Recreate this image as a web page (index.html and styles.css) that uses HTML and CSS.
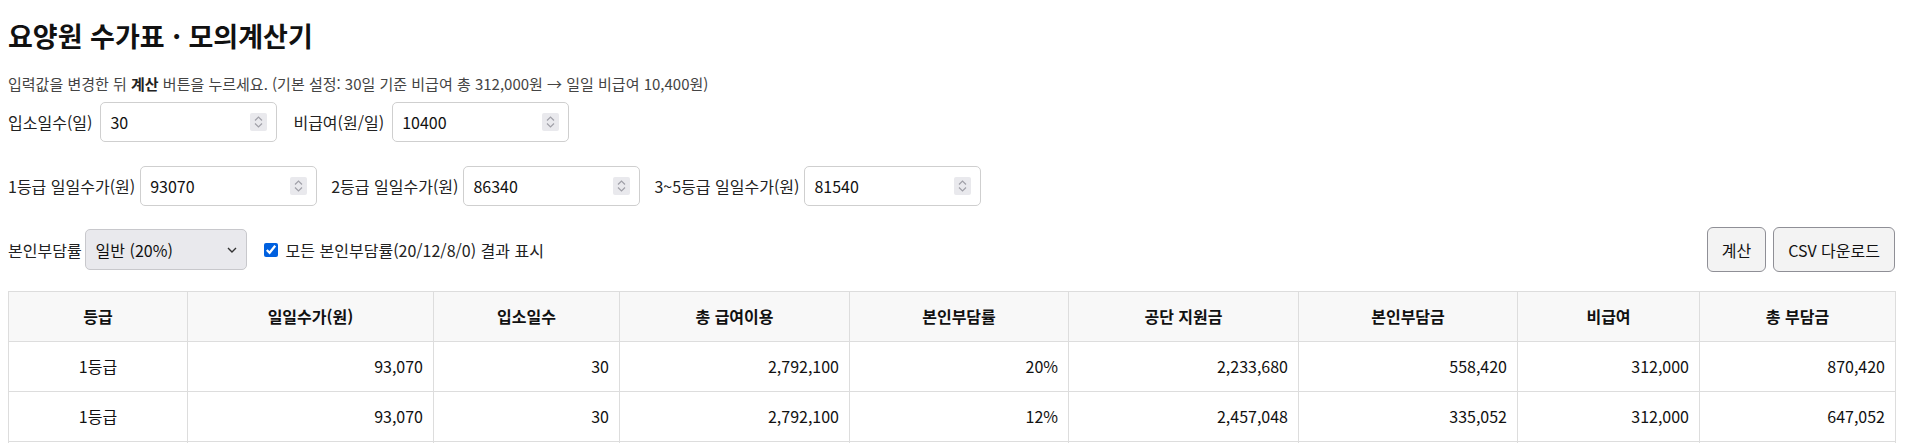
FILE: index.html
```html
<!DOCTYPE html>
<html lang="ko">
<head>
<meta charset="utf-8">
<title>요양원 수가표 · 모의계산기</title>
<link rel="stylesheet" href="styles.css">
</head>
<body>
<main class="page">
  <h1 class="title">요양원 수가표 · 모의계산기</h1>
  <p class="desc">입력값을 변경한 뒤 <b>계산</b> 버튼을 누르세요. (기본 설정: 30일 기준 비급여 총 312,000원 → 일일 비급여 10,400원)</p>

  <div class="row row-1">
    <label class="field"><span class="label">입소일수(일)</span>
      <span class="numbox"><input class="num" type="number" value="30"><span class="spin"><svg width="17" height="18" viewBox="0 0 17 18"><path d="M5 7.5 L8.5 4 L12 7.5 M5 10.5 L8.5 14 L12 10.5" fill="none" stroke="#a0a0a8" stroke-width="1.2"/></svg></span></span>
    </label>
    <label class="field"><span class="label">비급여(원/일)</span>
      <span class="numbox"><input class="num" type="number" value="10400"><span class="spin"><svg width="17" height="18" viewBox="0 0 17 18"><path d="M5 7.5 L8.5 4 L12 7.5 M5 10.5 L8.5 14 L12 10.5" fill="none" stroke="#a0a0a8" stroke-width="1.2"/></svg></span></span>
    </label>
  </div>

  <div class="row row-2">
    <label class="field"><span class="label">1등급 일일수가(원)</span>
      <span class="numbox"><input class="num" type="number" value="93070"><span class="spin"><svg width="17" height="18" viewBox="0 0 17 18"><path d="M5 7.5 L8.5 4 L12 7.5 M5 10.5 L8.5 14 L12 10.5" fill="none" stroke="#a0a0a8" stroke-width="1.2"/></svg></span></span>
    </label>
    <label class="field"><span class="label">2등급 일일수가(원)</span>
      <span class="numbox"><input class="num" type="number" value="86340"><span class="spin"><svg width="17" height="18" viewBox="0 0 17 18"><path d="M5 7.5 L8.5 4 L12 7.5 M5 10.5 L8.5 14 L12 10.5" fill="none" stroke="#a0a0a8" stroke-width="1.2"/></svg></span></span>
    </label>
    <label class="field"><span class="label">3~5등급 일일수가(원)</span>
      <span class="numbox"><input class="num" type="number" value="81540"><span class="spin"><svg width="17" height="18" viewBox="0 0 17 18"><path d="M5 7.5 L8.5 4 L12 7.5 M5 10.5 L8.5 14 L12 10.5" fill="none" stroke="#a0a0a8" stroke-width="1.2"/></svg></span></span>
    </label>
  </div>

  <div class="row row-3">
    <label class="field field-sel"><span class="label">본인부담률</span>
      <span class="selectbox">
        <select class="sel">
          <option selected>일반 (20%)</option>
          <option>감경 (12%)</option>
          <option>감경 (8%)</option>
          <option>기초수급 (0%)</option>
        </select>
        <svg class="chev" width="10" height="6" viewBox="0 0 10 6"><path d="M1 1 L5 5 L9 1" fill="none" stroke="#333" stroke-width="1.4"/></svg>
      </span>
    </label>
    <label class="check"><input type="checkbox" class="cb" checked><span>모든 본인부담률(20/12/8/0) 결과 표시</span></label>
    <div class="actions">
      <button class="btn" type="button">계산</button>
      <button class="btn" type="button">CSV 다운로드</button>
    </div>
  </div>

  <table class="result">
    <colgroup>
      <col class="w-grade"><col class="w-daily"><col class="w-days"><col class="w-total"><col class="w-rate"><col class="w-gov"><col class="w-self"><col class="w-nonpay"><col class="w-sum">
    </colgroup>
    <thead>
      <tr><th>등급</th><th>일일수가(원)</th><th>입소일수</th><th>총 급여이용</th><th>본인부담률</th><th>공단 지원금</th><th>본인부담금</th><th>비급여</th><th>총 부담금</th></tr>
    </thead>
    <tbody>
      <tr><td class="c">1등급</td><td>93,070</td><td>30</td><td>2,792,100</td><td>20%</td><td>2,233,680</td><td>558,420</td><td>312,000</td><td>870,420</td></tr>
      <tr><td class="c">1등급</td><td>93,070</td><td>30</td><td>2,792,100</td><td>12%</td><td>2,457,048</td><td>335,052</td><td>312,000</td><td>647,052</td></tr>
      <tr><td class="c">1등급</td><td>93,070</td><td>30</td><td>2,792,100</td><td>8%</td><td>2,568,732</td><td>223,368</td><td>312,000</td><td>535,368</td></tr>
      <tr><td class="c">1등급</td><td>93,070</td><td>30</td><td>2,792,100</td><td>0%</td><td>2,792,100</td><td>0</td><td>312,000</td><td>312,000</td></tr>
      <tr><td class="c">2등급</td><td>86,340</td><td>30</td><td>2,590,200</td><td>20%</td><td>2,072,160</td><td>518,040</td><td>312,000</td><td>830,040</td></tr>
      <tr><td class="c">2등급</td><td>86,340</td><td>30</td><td>2,590,200</td><td>12%</td><td>2,279,376</td><td>310,824</td><td>312,000</td><td>622,824</td></tr>
    </tbody>
  </table>
</main>
</body>
</html>
```
FILE: styles.css
```css
html, body {
  margin: 0;
  padding: 0;
  background: #fff;
}
body {
  font-family: "Noto Sans CJK KR", "Noto Sans", sans-serif;
  font-size: 16px;
  color: #222;
  overflow: hidden;
}
.page {
  padding: 18px 11px 0 8px;
}
.title {
  font-size: 27px;
  line-height: 35px;
  font-weight: 700;
  color: #111;
  margin: 0 0 21px;
}
.desc {
  font-size: 15px;
  line-height: 20px;
  color: #444;
  margin: 0 0 8px;
}
.desc b {
  color: #222;
}
.row {
  display: flex;
  align-items: center;
  gap: 16px;
}
.row-1 {
  height: 40px;
  margin-bottom: 24px;
}
.row-2 {
  height: 40px;
  margin-bottom: 21px;
  gap: 14px;
}
.row-3 {
  height: 45px;
  margin-bottom: 19px;
}
.field {
  display: flex;
  align-items: center;
  gap: 8px;
}
.row-2 .field {
  gap: 5px;
}
.field-sel {
  gap: 3px;
}
.label {
  white-space: nowrap;
}
.numbox {
  display: flex;
  align-items: center;
  box-sizing: border-box;
  width: 177px;
  height: 40px;
  border: 1px solid #cfcfcf;
  border-radius: 5px;
  background: #fff;
  padding: 0 9px 0 9px;
}
.num {
  flex: 1;
  min-width: 0;
  border: 0;
  outline: none;
  padding: 0;
  margin: 0;
  font: inherit;
  font-size: 16px;
  color: #111;
  background: transparent;
  -moz-appearance: textfield;
}
.num::-webkit-inner-spin-button,
.num::-webkit-outer-spin-button {
  -webkit-appearance: none;
  margin: 0;
}
.spin {
  display: flex;
  width: 17px;
  height: 18px;
  background: #e9e9ed;
  border-radius: 2px;
}
.selectbox {
  position: relative;
  display: inline-flex;
}
.sel {
  -webkit-appearance: none;
  appearance: none;
  box-sizing: border-box;
  width: 162px;
  height: 41px;
  padding: 0 28px 0 10px;
  border: 1px solid #c8c8cc;
  border-radius: 5px;
  background: #e9e9ed;
  font: inherit;
  font-size: 16px;
  color: #111;
}
.chev {
  position: absolute;
  right: 10px;
  top: 18px;
  pointer-events: none;
}
.check {
  display: flex;
  align-items: center;
  gap: 8px;
  margin-left: 1px;
}
.cb {
  width: 14px;
  height: 14px;
  margin: 0;
  accent-color: #0060df;
}
.actions {
  margin-left: auto;
  display: flex;
  gap: 7px;
}
.btn {
  box-sizing: border-box;
  height: 45px;
  padding: 0 14px;
  border: 1px solid #8f8f96;
  border-radius: 6px;
  background: #f3f3f3;
  font: inherit;
  font-size: 16px;
  color: #111;
}
.result {
  width: 100%;
  border-collapse: collapse;
  table-layout: fixed;
}
.w-grade { width: 179px; }
.w-daily { width: 246px; }
.w-days { width: 186px; }
.w-total { width: 230px; }
.w-rate { width: 219px; }
.w-gov { width: 230px; }
.w-self { width: 219px; }
.w-nonpay { width: 182px; }
.w-sum { width: 196px; }
.result th,
.result td {
  border: 1px solid #dddddd;
  padding: 14px 10px;
  line-height: 21px;
  font-size: 16px;
}
.result th {
  background: #f8f8f8;
  font-weight: 700;
  text-align: center;
  color: #111;
}
.result td {
  text-align: right;
  color: #111;
}
.result td.c {
  text-align: center;
}
```
